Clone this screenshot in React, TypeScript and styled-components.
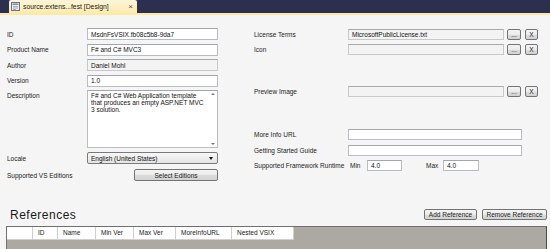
import styled, { createGlobalStyle } from "styled-components";

const GlobalStyle = createGlobalStyle`
  html, body {
    margin: 0;
    padding: 0;
    background: #f5f5f5;
  }
  * {
    box-sizing: border-box;
  }
`;

const Page = styled.div`
  width: 550px;
  height: 249px;
  overflow: hidden;
  display: flex;
  flex-direction: column;
  font-family: "Liberation Sans", Arial, sans-serif;
  font-size: 6.5px;
  color: #1e1e1e;
  background: #f5f5f5;
`;

// document tab strip
const TitleBar = styled.div`
  height: 13px;
  background: #2d2f51;
  display: flex;
  align-items: flex-end;
  padding-left: 9px;
`;

const Tab = styled.div`
  width: 128px;
  height: 13px;
  display: flex;
  align-items: center;
  padding: 0 4px 0 2px;
  gap: 3px;
  background: linear-gradient(#fcf5d9, #fdeab0);
  border-radius: 2px 2px 0 0;
  font-size: 6.8px;
  color: #1a1a1a;
`;

const TabTitle = styled.span`
  flex: 1;
  white-space: nowrap;
`;

const TabClose = styled.span`
  font-size: 8px;
  color: #555;
`;

const AccentLine = styled.div`
  height: 2px;
  background: #fde9a0;
`;

const Body = styled.div`
  flex: 1;
  display: flex;
  flex-direction: column;
  padding-top: 13px;
`;

const FormArea = styled.div`
  display: flex;
  padding-left: 7px;
  gap: 36px;
`;

const Column = styled.div`
  display: flex;
  flex-direction: column;
`;

const Row = styled.div<{ $h?: number; $gap?: number; $top?: boolean }>`
  display: flex;
  align-items: ${(p) => (p.$top ? "flex-start" : "center")};
  height: ${(p) => p.$h ?? 12}px;
  margin-bottom: ${(p) => p.$gap ?? 3.5}px;
`;

const Label = styled.div<{ $w: number; $pt?: number; $pl?: number }>`
  width: ${(p) => p.$w}px;
  padding-top: ${(p) => p.$pt ?? 0}px;
  padding-left: ${(p) => p.$pl ?? 0}px;
  white-space: nowrap;
  color: #222;
`;

const TextBox = styled.div<{ $w: number; $muted?: boolean }>`
  width: ${(p) => p.$w}px;
  height: 100%;
  display: flex;
  align-items: center;
  padding-left: 3px;
  background: ${(p) => (p.$muted ? "#f3f3f3" : "#ffffff")};
  border: 1px solid ${(p) => (p.$muted ? "#c9c9c9" : "#b9bcc2")};
  border-top-color: ${(p) => (p.$muted ? "#a9a9a9" : "#a3a6ad")};
  color: #111;
  white-space: nowrap;
  overflow: hidden;
`;

const TextArea = styled.div`
  width: 131px;
  height: 100%;
  position: relative;
  background: #fff;
  border: 1px solid #b9bcc2;
  border-top-color: #a3a6ad;
  padding: 1px 12px 0 3px;
  line-height: 7px;
  color: #111;
`;

const ScrollArrow = styled.span<{ $bottom?: boolean }>`
  position: absolute;
  right: 2px;
  ${(p) => (p.$bottom ? "bottom: 2px;" : "top: 2px;")}
  width: 0;
  height: 0;
  border-left: 2px solid transparent;
  border-right: 2px solid transparent;
  ${(p) =>
    p.$bottom ? "border-top: 2px solid #777;" : "border-bottom: 2px solid #777;"}
`;

const Dropdown = styled.div`
  width: 131px;
  height: 100%;
  display: flex;
  align-items: center;
  justify-content: space-between;
  padding: 0 4px 0 3px;
  background: linear-gradient(#f7f7f7, #e4e4e4);
  border: 1px solid #7a7a7a;
  border-radius: 2px;
  color: #111;
`;

const DropArrow = styled.span`
  width: 0;
  height: 0;
  border-left: 2.5px solid transparent;
  border-right: 2.5px solid transparent;
  border-top: 3px solid #111;
`;

const Button = styled.button<{ $w: number; $ml?: number }>`
  width: ${(p) => p.$w}px;
  height: 100%;
  margin-left: ${(p) => p.$ml ?? 0}px;
  padding: 0;
  font-family: inherit;
  font-size: 6.5px;
  color: #1a1a1a;
  background: linear-gradient(#f4f4f4 0%, #ebebeb 50%, #dcdcdc 51%, #d2d2d2 100%);
  border: 1px solid #747474;
  border-radius: 2px;
  display: flex;
  align-items: center;
  justify-content: center;
  white-space: nowrap;
`;

const Spacer = styled.div<{ $h: number }>`
  height: ${(p) => p.$h}px;
  flex: none;
`;

const ReferencesBar = styled.div`
  display: flex;
  align-items: center;
  justify-content: space-between;
  height: 16px;
  margin-top: 22px;
  padding: 0 3px 0 10px;
`;

const Heading = styled.div`
  font-size: 12px;
  letter-spacing: 0.5px;
  color: #1a1a1a;
`;

const ButtonGroup = styled.div`
  display: flex;
  height: 11px;
  gap: 5px;
`;

const Grid = styled.div`
  flex: 1;
  margin: 3px 3px 0 6px;
  background: #aca9a3;
  border: 1px solid #6f6f6f;
  border-bottom: none;
  border-right-color: #4a4a4a;
`;

const HeaderRow = styled.div`
  display: flex;
  height: 13px;
`;

const HeaderCell = styled.div<{ $w: number }>`
  width: ${(p) => p.$w}px;
  height: 100%;
  display: flex;
  align-items: center;
  padding-left: 5px;
  background: #fff;
  border-right: 1px solid #cfcfcf;
  border-bottom: 1px solid #cfcfcf;
  white-space: nowrap;
  color: #1a1a1a;
`;

const columns = [
  { name: "", w: 26 },
  { name: "ID", w: 25 },
  { name: "Name", w: 38 },
  { name: "Min Ver", w: 38 },
  { name: "Max Ver", w: 42 },
  { name: "MoreInfoURL", w: 56 },
  { name: "Nested VSIX", w: 62 },
];

const FileIcon = () => (
  <svg width="9" height="9" viewBox="0 0 9 9">
    <rect x="0.5" y="0.5" width="8" height="8" fill="#e9eef5" stroke="#6a7487" />
    <rect x="1.5" y="1.5" width="6" height="1.5" fill="#7d8fb0" />
    <path d="M2 4.5h5M2 6h5M2 7.5h3" stroke="#8a93a3" strokeWidth="0.7" />
  </svg>
);

const PickerRow = ({ label, value }: { label: string; value?: string }) => (
  <Row $h={11} $gap={4}>
    <Label $w={94}>{label}</Label>
    <TextBox $w={156} $muted>
      {value}
    </TextBox>
    <Button $w={14} $ml={3}>...</Button>
    <Button $w={13} $ml={4}>X</Button>
  </Row>
);

export default function App() {
  return (
    <Page>
      <GlobalStyle />
      <TitleBar>
        <Tab>
          <FileIcon />
          <TabTitle>source.extens...fest [Design]</TabTitle>
          <TabClose>×</TabClose>
        </Tab>
      </TitleBar>
      <AccentLine />

      <Body>
        <FormArea>
          {/* left side: identity */}
          <Column>
            <Row>
              <Label $w={80}>ID</Label>
              <TextBox $w={131}>MsdnFsVSIX.fb08c5b8-9da7</TextBox>
            </Row>
            <Row>
              <Label $w={80}>Product Name</Label>
              <TextBox $w={131}>F# and C# MVC3</TextBox>
            </Row>
            <Row>
              <Label $w={80}>Author</Label>
              <TextBox $w={131} $muted>
                Daniel Mohl
              </TextBox>
            </Row>
            <Row>
              <Label $w={80}>Version</Label>
              <TextBox $w={131}>1.0</TextBox>
            </Row>
            <Row $h={58} $gap={4} $top>
              <Label $w={80} $pt={2}>
                Description
              </Label>
              <TextArea>
                F# and C# Web Application template that produces an empty ASP.NET MVC 3
                solution.
                <ScrollArrow />
                <ScrollArrow $bottom />
              </TextArea>
            </Row>
            <Row $gap={5}>
              <Label $w={80}>Locale</Label>
              <Dropdown>
                English (United States)
                <DropArrow />
              </Dropdown>
            </Row>
            <Row>
              <Label $w={127}>Supported VS Editions</Label>
              <Button $w={84}>Select Editions</Button>
            </Row>
          </Column>

          {/* right side: files and links */}
          <Column>
            <Spacer $h={1} />
            <PickerRow label="License Terms" value="MicrosoftPublicLicense.txt" />
            <PickerRow label="Icon" />
            <Spacer $h={27} />
            <PickerRow label="Preview Image" />
            <Spacer $h={28} />
            <Row $h={11} $gap={5}>
              <Label $w={94}>More Info URL</Label>
              <TextBox $w={174} />
            </Row>
            <Row $h={11} $gap={4}>
              <Label $w={94}>Getting Started Guide</Label>
              <TextBox $w={174} />
            </Row>
            <Row $h={11}>
              <Label $w={96}>Supported Framework Runtime</Label>
              <Label $w={17}>Min</Label>
              <TextBox $w={35}>4.0</TextBox>
              <Label $w={41} $pl={24}>
                Max
              </Label>
              <TextBox $w={36}>4.0</TextBox>
            </Row>
          </Column>
        </FormArea>

        <ReferencesBar>
          <Heading>References</Heading>
          <ButtonGroup>
            <Button $w={53}>Add Reference</Button>
            <Button $w={65}>Remove Reference</Button>
          </ButtonGroup>
        </ReferencesBar>

        <Grid>
          <HeaderRow>
            {columns.map((c) => (
              <HeaderCell key={c.name || "row"} $w={c.w}>
                {c.name}
              </HeaderCell>
            ))}
          </HeaderRow>
        </Grid>
      </Body>
    </Page>
  );
}
